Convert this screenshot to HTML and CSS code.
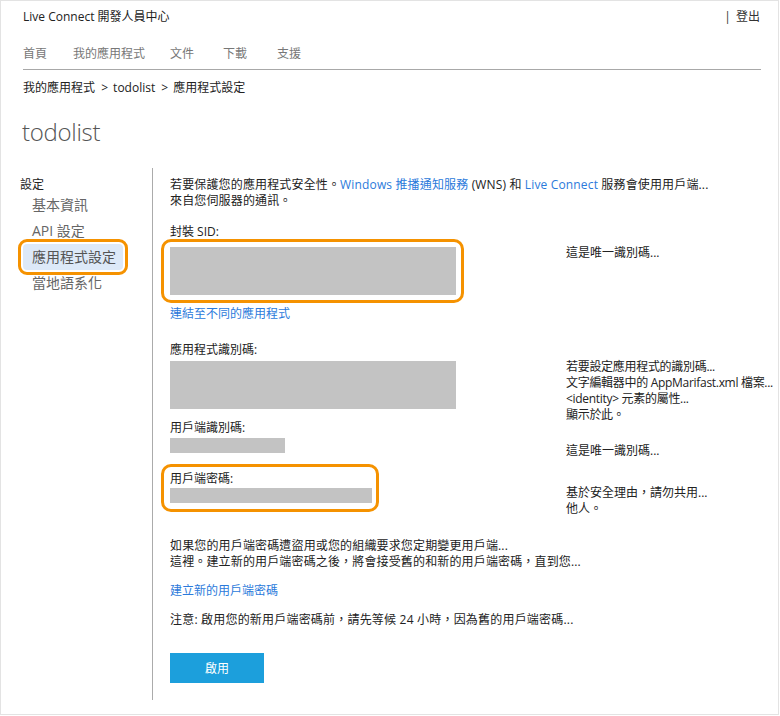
FILE: index.html
```html
<!DOCTYPE html>
<html lang="zh-Hant">
<head>
<meta charset="utf-8">
<title>Live Connect 開發人員中心</title>
<link rel="stylesheet" href="styles.css">
</head>
<body>
<div class="page">
  <header class="topbar">
    <span class="brand">Live Connect 開發人員中心</span>
    <span class="signout"><span class="sep">|</span> 登出</span>
  </header>
  <nav class="nav">
    <a class="nav-item n1">首頁</a>
    <a class="nav-item n2">我的應用程式</a>
    <a class="nav-item n3">文件</a>
    <a class="nav-item n4">下載</a>
    <a class="nav-item">支援</a>
  </nav>
  <div class="crumbs">我的應用程式 <span class="gt">&gt;</span> todolist <span class="gt">&gt;</span> 應用程式設定</div>
  <h1 class="title">todolist</h1>
  <div class="content">
    <aside class="sidebar">
      <div class="side-head">設定</div>
      <div class="side-item">基本資訊</div>
      <div class="side-item">API 設定</div>
      <div class="side-hl"><div class="side-item selected">應用程式設定</div></div>
      <div class="side-item">當地語系化</div>
    </aside>
    <main class="main">
      <p class="intro">若要保護您的應用程式安全性。<a class="link">Windows 推播通知服務</a> (WNS) 和 <a class="link">Live Connect</a> 服務會使用用戶端...<br>來自您伺服器的通訊。</p>

      <section class="field f-sid">
        <div class="field-main">
          <div class="label">封裝 SID:</div>
          <div class="hl hl-sid"><div class="box box-big"></div></div>
          <a class="link link-block">連結至不同的應用程式</a>
        </div>
        <div class="note note-sid">這是唯一識別碼...</div>
      </section>

      <section class="field f-appid">
        <div class="field-main">
          <div class="label">應用程式識別碼:</div>
          <div class="box box-big box-appid"></div>
        </div>
        <div class="note note-appid">若要設定應用程式的識別碼...<br>文字編輯器中的 AppMarifast.xml 檔案...<br>&lt;identity&gt; 元素的屬性...<br>顯示於此。</div>
      </section>

      <section class="field f-cid">
        <div class="field-main">
          <div class="label">用戶端識別碼:</div>
          <div class="box box-small"></div>
        </div>
        <div class="note note-cid">這是唯一識別碼...</div>
      </section>

      <section class="field f-secret">
        <div class="field-main">
          <div class="hl hl-secret">
            <div class="label">用戶端密碼:</div>
            <div class="box box-secret"></div>
          </div>
        </div>
        <div class="note note-secret">基於安全理由，請勿共用...<br>他人。</div>
      </section>

      <p class="para">如果您的用戶端密碼遭盜用或您的組織要求您定期變更用戶端...<br>這裡。建立新的用戶端密碼之後，將會接受舊的和新的用戶端密碼，直到您...</p>
      <a class="link link-block link-new">建立新的用戶端密碼</a>
      <p class="para para-note">注意: 啟用您的新用戶端密碼前，請先等候 24 小時，因為舊的用戶端密碼...</p>
      <button class="btn">啟用</button>
    </main>
  </div>
</div>
</body>
</html>
```

FILE: styles.css
```css
* { box-sizing: border-box; }
html, body { margin: 0; padding: 0; background: #fff; }
body {
  font-family: "Open Sans", "Noto Sans CJK TC", sans-serif;
  font-size: 12px;
  line-height: 16px;
  color: #222;
}
.page {
  width: 779px;
  height: 715px;
  border: 1px solid #e3e3e3;
  display: flex;
  flex-direction: column;
}
.topbar {
  display: flex;
  justify-content: space-between;
  padding: 8px 18px 0 22px;
}
.brand { color: #222; }
.signout { color: #333; }
.sep { margin-right: 2px; }
.nav {
  display: flex;
  margin: 21px 17px 0 22px;
  padding-bottom: 7px;
  border-bottom: 1px solid #a8a8a8;
}
.nav-item { color: #777; margin-right: 30px; }
.nav-item.n1 { margin-right: 26px; }
.nav-item.n2 { margin-right: 25px; }
.nav-item.n3 { margin-right: 29px; }
.nav-item.n4 { margin-right: 30px; }
.crumbs { margin: 10px 0 0 22px; color: #222; }
.gt { margin: 0 2px 0 3px; }
.title {
  margin: 20px 0 0 21px;
  font-size: 24px;
  line-height: 32px;
  font-weight: 300;
  color: #555;
  letter-spacing: -0.3px;
}
.content {
  flex: 1;
  display: flex;
  margin: 20px 0 14px 0;
}
.sidebar {
  width: 151px;
  flex-shrink: 0;
  padding: 9px 0 0 19px;
}
.side-head { line-height: 15px; color: #222; }
.side-item {
  font-size: 14px;
  line-height: 26px;
  color: #666;
  margin-left: 12px;
}
.side-hl {
  display: inline-block;
  margin: -5px 0 -5px -2px;
  border: 3px solid #f59200;
  border-radius: 9px;
  padding: 2px;
}
.side-hl .side-item.selected {
  margin-left: 0;
  padding: 0 7px 0 9px;
  background: #dde9f8;
  border-radius: 4px;
  color: #555;
}
.main {
  flex: 1;
  min-width: 0;
  border-left: 1px solid #ababab;
  padding: 9px 0 0 17px;
}
.intro { margin: 0; letter-spacing: 0.15px; }
.link { color: #2b7adb; text-decoration: none; }
.link-block { display: block; }
.field { display: flex; align-items: flex-start; }
.field-main { width: 396px; flex-shrink: 0; }
.label { color: #222; }
.box { background: #c3c3c3; }
.box-big { width: 286px; height: 48px; }
.box-small { width: 115px; height: 15px; margin-top: 2px; }
.box-secret { width: 202px; height: 15px; margin-top: 1px; }
.hl {
  border: 3px solid #f59200;
  border-radius: 10px;
}
.hl-sid {
  width: 303px;
  margin: -1px 0 0 -9px;
  padding: 5px 6px;
}
.f-sid { margin-top: 15px; }
.f-sid .link-block { margin-top: 3px; }
.note { color: #222; white-space: nowrap; height: 0; overflow: visible; }
.note-sid { margin-top: 21px; }
.f-appid { margin-top: 20px; }
.box-appid { margin-top: 3px; }
.note-appid { margin-top: 17px; letter-spacing: -0.3px; }
.f-cid { margin-top: 11px; }
.note-cid { margin-top: 23px; }
.f-secret { margin-top: 18px; }
.hl-secret {
  width: 218px;
  margin: -7px 0 -9px -9px;
  padding: 4px 4px 6px 6px;
}
.note-secret { margin-top: 14px; }
.para { margin: 35px 0 0 0; letter-spacing: 0.15px; }
.link-new { margin-top: 13px; }
.para-note { margin-top: 13px; letter-spacing: 0.2px; }
.btn {
  display: block;
  margin-top: 25px;
  width: 94px;
  height: 30px;
  border: 0;
  background: #1c9fdc;
  color: #fff;
  font-family: inherit;
  font-size: 12px;
  padding: 0;
}
```
